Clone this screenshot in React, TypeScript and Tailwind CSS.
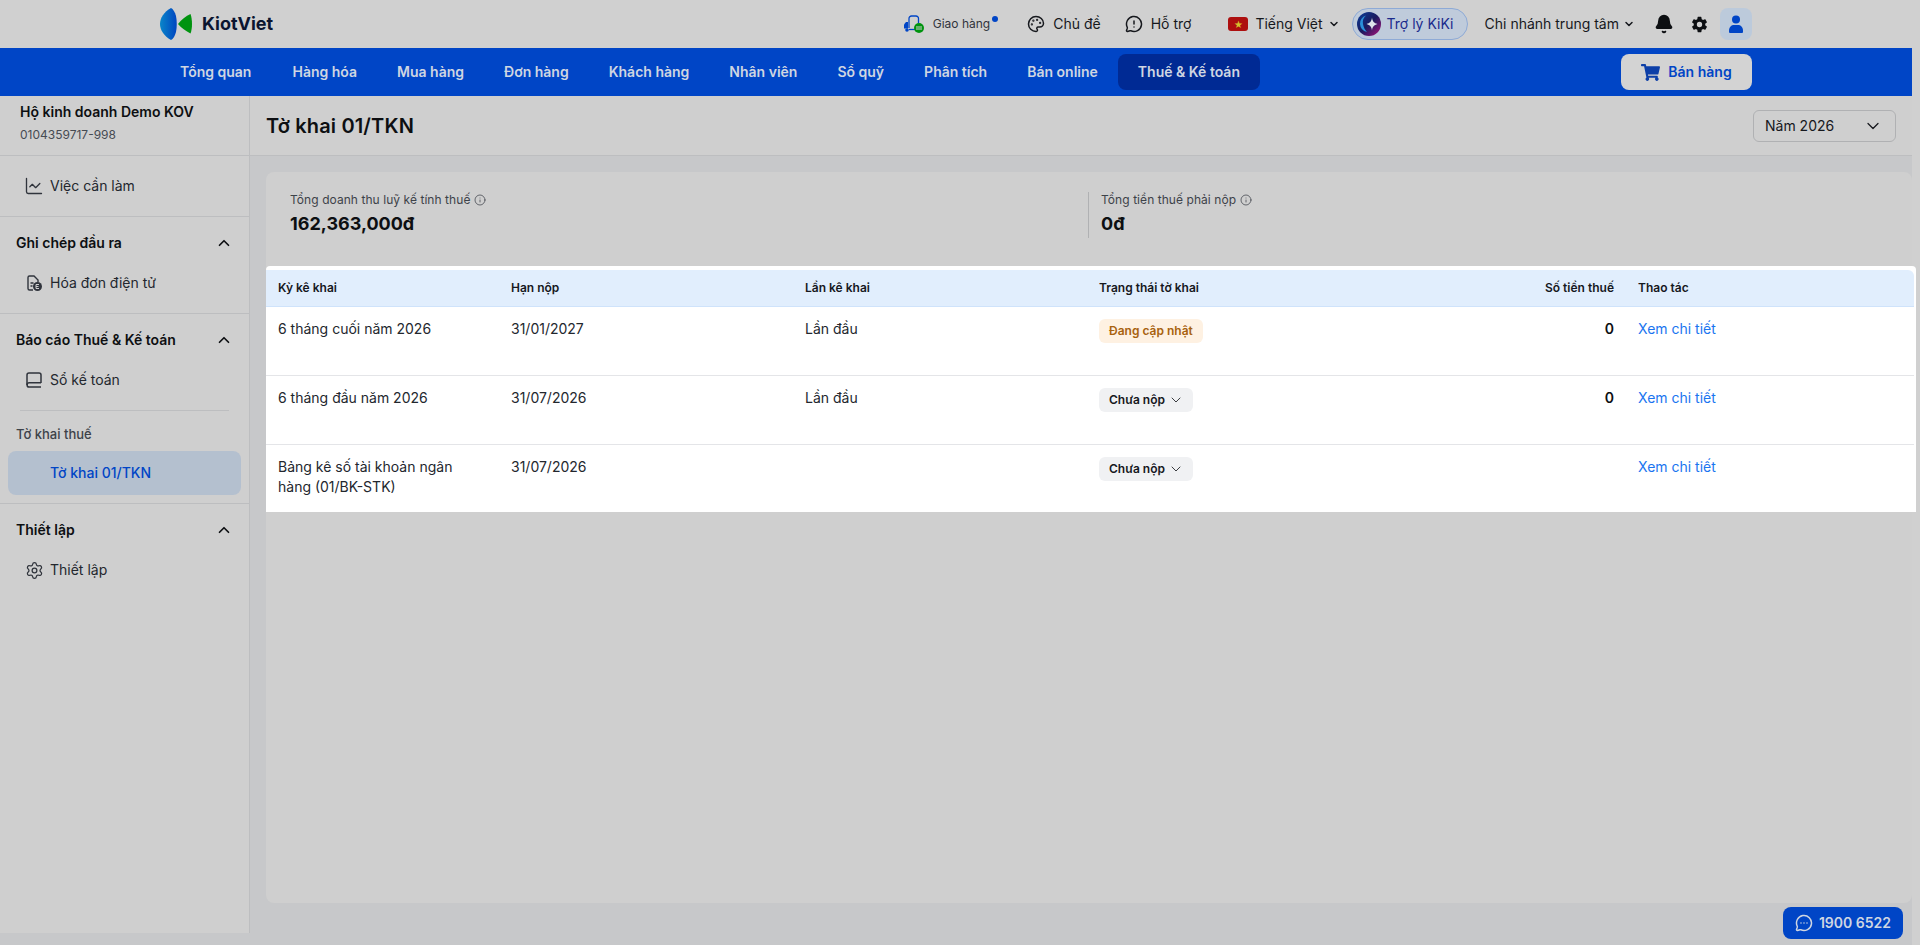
import {
  Bell,
  ChartLine,
  ChevronDown,
  ChevronUp,
  Info,
  MessageCircleMore,
  MessageCircleWarning,
  Palette,
  Settings,
} from "lucide-react";
import { FaShoppingCart } from "react-icons/fa";
import { IoSettingsSharp } from "react-icons/io5";

const navItems = [
  "Tổng quan",
  "Hàng hóa",
  "Mua hàng",
  "Đơn hàng",
  "Khách hàng",
  "Nhân viên",
  "Sổ quỹ",
  "Phân tích",
  "Bán online",
];

const rows = [
  { period: "6 tháng cuối năm 2026", due: "31/01/2027", times: "Lần đầu", status: "updating", amount: "0" },
  { period: "6 tháng đầu năm 2026", due: "31/07/2026", times: "Lần đầu", status: "open", amount: "0" },
  { period: "Bảng kê số tài khoản ngân hàng (01/BK-STK)", due: "31/07/2026", times: "", status: "open", amount: "" },
];

function Logo() {
  return (
    <svg width="32" height="32" viewBox="0 0 32 32" className="shrink-0">
      <defs>
        <linearGradient id="logo-blue" x1="0" y1="0" x2="1" y2="0">
          <stop offset="0" stopColor="#0a85c9" />
          <stop offset="1" stopColor="#0045c0" />
        </linearGradient>
      </defs>
      <path d="M11 0C4 4 0 10 0 16c0 6 4 12 11 16 2-1 4-4 5-8 1-5 1-11 0-16-1-4-3-7-5-8Z" fill="url(#logo-blue)" />
      <path d="M30.500 6C26 8 21 12 18 16C21 20 26 23 30.500 25.500C32.500 20 32.500 12 30.500 6Z" fill="#00930f" />
    </svg>
  );
}

function TruckIcon() {
  return (
    <svg width="22" height="18" viewBox="0 0 22 18" fill="none" className="shrink-0">
      <path d="M6 13V3.500A2.500 2.500 0 0 1 8.500 1H13a2.500 2.500 0 0 1 2.500 2.500V8" stroke="#0045c6" strokeWidth="1.300" />
      <path d="M5 7H3L1 9.500v4h4V7Z" fill="#0045c6" />
      <path d="M6 14.500h6" stroke="#0045c6" strokeWidth="1.300" />
      <circle cx="4" cy="15" r="1.800" fill="#0045c6" />
      <circle cx="16" cy="13" r="5" fill="#00930f" />
      <rect x="13" y="11.500" width="6" height="1" fill="#cfcfcf" />
      <rect x="13" y="13.500" width="6" height="1" fill="#cfcfcf" />
    </svg>
  );
}

function InvoiceIcon() {
  return (
    <svg width="16" height="16" viewBox="0 0 16 16" fill="none" className="shrink-0">
      <path d="M7 15H3.500A1.500 1.500 0 0 1 2 13.500v-11A1.500 1.500 0 0 1 3.500 1H8l4 4v2" stroke="#30343c" strokeWidth="1.400" />
      <path d="M4.500 8h3M4.500 11h2" stroke="#30343c" strokeWidth="1.400" />
      <circle cx="11.500" cy="11.500" r="4.500" fill="#30343c" />
      <path d="M13 9.500h-3v4h3M10 11.500h2.500" stroke="#cfcfcf" strokeWidth="1" />
    </svg>
  );
}

function LedgerIcon() {
  return (
    <svg width="16" height="16" viewBox="0 0 16 16" fill="none" className="shrink-0">
      <path d="M15 11V3a2 2 0 0 0-2-2H3a2 2 0 0 0-2 2v10" stroke="#30343c" strokeWidth="1.500" />
      <path d="M15 15H3.200a2.100 2.100 0 0 1 0-4.200H15" stroke="#30343c" strokeWidth="1.500" />
    </svg>
  );
}

function UserIcon() {
  return (
    <svg width="16" height="18" viewBox="0 0 16 18" fill="#0045c6">
      <circle cx="8" cy="4.500" r="4" />
      <path d="M1 15.500C1 12 3.500 10 6 10h4c2.500 0 5 2 5 5.500V17a1 1 0 0 1-1 1H2a1 1 0 0 1-1-1Z" />
    </svg>
  );
}

function FlagIcon() {
  return (
    <div className="flex h-[14px] w-5 items-center justify-center rounded-[3px] bg-[#ad0f0f] text-[9px] leading-none text-[#d6c02c]">
      ★
    </div>
  );
}

function KikiIcon() {
  return (
    <svg width="24" height="24" viewBox="0 0 24 24" className="shrink-0">
      <defs>
        <linearGradient id="kiki" x1="0" y1="0" x2="1" y2="1">
          <stop offset="0" stopColor="#0a3f9c" />
          <stop offset="0.5" stopColor="#1a1a5e" />
          <stop offset="1" stopColor="#b0107a" />
        </linearGradient>
      </defs>
      <circle cx="12" cy="12" r="12" fill="url(#kiki)" />
      <path d="M3 12a9 9 0 0 1 6-8.500C6 6 5.500 9 6 12s2 6 4 8a9 9 0 0 1-7-8Z" fill="#2b8fd8" />
      <path d="M15 5.500c.5 4 2 5.500 5.500 6.500-3.500 1-5 2.500-5.500 6.500-.5-4-2-5.500-5.500-6.500 3.500-1 5-2.500 5.500-6.500Z" fill="#dfe3ea" />
    </svg>
  );
}

function SideItem({ icon, label }: { icon: React.ReactNode; label: string }) {
  return (
    <div className="flex h-10 items-center gap-2 pl-[26px] text-sm text-[#23272e]">
      <span className="flex w-4 justify-center text-[#30343c]">{icon}</span>
      <span>{label}</span>
    </div>
  );
}

function SideHeading({ label }: { label: string }) {
  return (
    <div className="mb-[6px] flex h-7 items-center justify-between pl-4 pr-4 text-sm font-semibold text-[#0d0f12]">
      <span>{label}</span>
      <ChevronUp size={18} strokeWidth={2.25} />
    </div>
  );
}

function Sidebar() {
  return (
    <aside className="flex h-[837px] w-[250px] shrink-0 flex-col border-r border-[#bdbec0] bg-[#cfcfcf]">
      <div className="flex h-[60px] shrink-0 flex-col border-b border-[#bdbec0] pl-5 pt-[6px]">
        <div className="text-sm leading-5 font-semibold text-[#0d0f12]">Hộ kinh doanh Demo KOV</div>
        <div className="mt-[3px] text-xs leading-5 text-[#464b53]">0104359717-998</div>
      </div>
      <div className="flex h-[61px] shrink-0 items-center border-b border-[#bdbec0]">
        <div className="w-full">
          <SideItem icon={<ChartLine size={20} strokeWidth={1.6} className="shrink-0" />} label="Việc cần làm" />
        </div>
      </div>
      <div className="h-[97px] shrink-0 border-b border-[#bdbec0] pt-3">
        <SideHeading label="Ghi chép đầu ra" />
        <SideItem icon={<InvoiceIcon />} label="Hóa đơn điện tử" />
      </div>
      <div className="h-[190px] shrink-0 border-b border-[#bdbec0] pt-3">
        <SideHeading label="Báo cáo Thuế & Kế toán" />
        <SideItem icon={<LedgerIcon />} label="Sổ kế toán" />
        <div className="mx-5 mt-[10px] border-t border-[#bdbec0]" />
        <div className="mt-[15px] pl-4 text-[13px] leading-4 font-medium text-[#3d4249]">Tờ khai thuế</div>
        <div className="mx-2 mt-[9px] flex h-11 items-center rounded-lg bg-[#b4c0cf] pl-[42px] text-sm font-medium text-[#0045c6]">
          Tờ khai 01/TKN
        </div>
      </div>
      <div className="pt-3">
        <SideHeading label="Thiết lập" />
        <SideItem icon={<Settings size={19} strokeWidth={1.6} className="shrink-0" />} label="Thiết lập" />
      </div>
    </aside>
  );
}

function StatusCell({ status }: { status: string }) {
  if (status === "updating") {
    return (
      <span className="inline-flex h-6 items-center rounded-md bg-[#fef1e2] px-[10px] text-xs font-semibold text-[#a8620f]">
        Đang cập nhật
      </span>
    );
  }
  return (
    <span className="inline-flex h-6 items-center gap-[3px] rounded-md bg-[#f0f1f3] pl-[10px] pr-[9px] text-xs font-semibold text-[#16181d]">
      Chưa nộp
      <ChevronDown size={16} strokeWidth={1.25} />
    </span>
  );
}

function TaxTable() {
  return (
    <div className="-mr-1 rounded-t-sm bg-white pt-1 pb-[1px] pr-[2px]">
      <div className="grid h-[37px] grid-cols-[233px_294px_294px_515px_24px_1fr] items-center rounded-tr-md border-b border-[#cfe3fb] bg-[#e1eefd] pl-3 text-xs font-semibold text-[#16181d]">
        <div>Kỳ kê khai</div>
        <div>Hạn nộp</div>
        <div>Lần kê khai</div>
        <div className="flex justify-between">
          <span>Trạng thái tờ khai</span>
          <span>Số tiền thuế</span>
        </div>
        <div />
        <div>Thao tác</div>
      </div>
      {rows.map((r, i) => (
        <div
          key={i}
          className={`grid grid-cols-[233px_294px_294px_515px_24px_1fr] items-start pl-3 pt-3 text-sm leading-5 text-[#23272e] ${
            i < rows.length - 1 ? "h-[69px] border-b border-[#e4e5e8]" : "h-[66px]"
          }`}
        >
          <div className="pr-8">{r.period}</div>
          <div>{r.due}</div>
          <div>{r.times}</div>
          <div className="flex items-start justify-between">
            <StatusCell status={r.status} />
            <span className="font-semibold text-[#0d0f12]">{r.amount}</span>
          </div>
          <div />
          <div className="text-[#1a75f0]">Xem chi tiết</div>
        </div>
      ))}
    </div>
  );
}

function TopBar() {
  return (
    <div className="flex h-12 items-center px-[160px]">
      <div className="flex items-center gap-[10px]">
        <Logo />
        <span className="text-lg font-bold text-[#0b1530]">KiotViet</span>
      </div>
      <div className="ml-auto flex items-center text-sm text-[#16181d]">
        <div className="relative flex items-center gap-2 text-xs text-[#30343c]">
          <TruckIcon />
          Giao hàng
          <span className="absolute -right-2 top-[1px] h-[6px] w-[6px] rounded-full bg-[#0045c6]" />
        </div>
        <div className="ml-[37px] flex items-center gap-2">
          <Palette size={18} />
          Chủ đề
        </div>
        <div className="ml-6 flex items-center gap-2">
          <MessageCircleWarning size={18} />
          Hỗ trợ
        </div>
        <div className="ml-[37px] flex items-center gap-[7px]">
          <FlagIcon />
          <span>Tiếng Việt</span>
          <ChevronDown size={12} strokeWidth={3} className="-ml-[2px]" />
        </div>
        <div className="ml-3 flex h-8 w-[116px] items-center gap-[6px] rounded-full border border-[#8eaad6] bg-[#bfcbdb] pl-1 text-[#1a2a8c]">
          <KikiIcon />
          Trợ lý KiKi
        </div>
        <div className="ml-[17px] flex items-center gap-[4px]">
          Chi nhánh trung tâm
          <ChevronDown size={12} strokeWidth={3} />
        </div>
        <Bell size={20} fill="#0d0f12" className="ml-[19px] text-[#0d0f12]" />
        <IoSettingsSharp size={17} className="ml-[17px] text-[#0d0f12]" />
        <div className="ml-[12px] flex h-8 w-8 items-center justify-center rounded-lg bg-[#bccadb]">
          <UserIcon />
        </div>
      </div>
    </div>
  );
}

function NavBar() {
  return (
    <div className="flex h-12 items-center bg-[#0045c6] px-[160px]">
      {navItems.map((n) => (
        <div key={n} className="px-5 text-sm font-semibold text-[#cfd6e2] first:pr-[21px]">
          {n}
        </div>
      ))}
      <div className="flex h-9 items-center rounded-lg bg-[#002a94] px-5 text-sm font-semibold text-[#cfd6e2]">
        Thuế &amp; Kế toán
      </div>
      <div className="ml-auto flex h-9 w-[131px] items-center justify-center gap-2 rounded-lg bg-[#d3d3d3] text-sm font-semibold text-[#0045c6]">
        <FaShoppingCart size={19} className="text-[#0d3fa8]" />
        Bán hàng
      </div>
    </div>
  );
}

export default function App() {
  return (
    <div className="relative h-[945px] w-full overflow-hidden bg-[#d0d0d0] font-['Inter',sans-serif]">
      <div className="w-[1912px]">
        <TopBar />
        <NavBar />
        <div className="flex h-[849px] items-start bg-[#c7c8ca]">
          <Sidebar />
          <main className="flex min-w-0 flex-1 flex-col">
            <div className="flex h-[60px] items-center justify-between border-b border-[#bdbec0] bg-[#cfcfcf] pl-4 pr-4">
              <h1 className="text-xl font-semibold tracking-[0.15px] text-[#0d0f12]">Tờ khai 01/TKN</h1>
              <div className="flex h-8 w-[143px] items-center justify-between rounded-md border border-[#b0b1b3] pl-[11px] pr-[12px] text-sm text-[#16181d]">
                Năm 2026
                <ChevronDown size={20} strokeWidth={1.5} />
              </div>
            </div>
            <div className="ml-4 mt-4 h-[731px] rounded-lg bg-[#cfcfcf]">
              <div className="flex h-[94px] items-start pt-5">
                <div className="w-[822px] pl-6">
                  <div className="flex items-center gap-1 text-xs leading-4 tracking-[0.06px] text-[#3d4249]">
                    Tổng doanh thu luỹ kế tính thuế
                    <Info size={12} strokeWidth={1.5} />
                  </div>
                  <div className="mt-[2px] text-lg leading-7 font-bold text-[#0d0f12]">162,363,000đ</div>
                </div>
                <div className="border-l border-[#b0b1b3] pl-3">
                  <div className="flex items-center gap-1 text-xs leading-4 tracking-[0.06px] text-[#3d4249]">
                    Tổng tiền thuế phải nộp
                    <Info size={12} strokeWidth={1.5} />
                  </div>
                  <div className="mt-[2px] text-lg leading-7 font-bold text-[#0d0f12]">0đ</div>
                </div>
              </div>
              <TaxTable />
            </div>
          </main>
        </div>
      </div>
      <div className="absolute bottom-[6px] left-[1783px] flex h-8 w-[120px] items-center justify-center gap-[6px] rounded-lg bg-[#0045c6] text-sm font-semibold text-[#cfd6e2]">
        <MessageCircleMore size={18} />
        1900 6522
      </div>
    </div>
  );
}
